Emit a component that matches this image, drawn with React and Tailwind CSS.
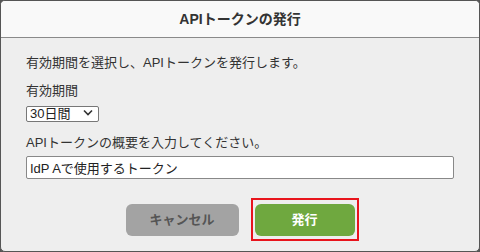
import React from 'react';

const App = () => {
  return (
    <div className="w-[480px] h-[252px] bg-[#555] font-['Liberation_Sans','Noto_Sans_CJK_JP',sans-serif]">
      <div className="w-full h-full flex flex-col rounded-[5px] border border-[#555] overflow-hidden bg-[#eeeeee]">
        {/* Header */}
        <div className="h-[37px] shrink-0 flex items-center justify-center bg-[#f9f9f9] border-b border-[#8a8a8a]">
          <h1 className="text-[14px] font-bold text-[#333] leading-none">APIトークンの発行</h1>
        </div>

        {/* Body */}
        <div className="flex-1 px-[25px] pt-[16px] text-[13px] leading-[18px] text-[#333]">
          <p>有効期間を選択し、APIトークンを発行します。</p>
          <p className="mt-[10px]">有効期間</p>
          <div className="relative mt-[5px] w-[73px] h-[16px]">
            <select
              defaultValue="30"
              className="appearance-none w-full h-full bg-white border border-[#777] rounded-[2px] pl-[3px] text-[13px] leading-[14px] text-[#222] outline-none"
            >
              <option value="30">30日間</option>
              <option value="60">60日間</option>
              <option value="90">90日間</option>
            </select>
            <svg className="absolute right-[6px] top-[4px] pointer-events-none" width="10" height="7" viewBox="0 0 10 7">
              <path d="M1 1.5 L5 5.5 L9 1.5" fill="none" stroke="#333" strokeWidth="1.6" />
            </svg>
          </div>
          <p className="mt-[13px]">APIトークンの概要を入力してください。</p>
          <input
            type="text"
            defaultValue="IdP Aで使用するトークン"
            className="mt-[4px] block w-[428px] h-[23px] bg-white border border-[#888] rounded-[2px] px-[3px] text-[13px] text-[#222] outline-none"
          />

          {/* Actions */}
          <div className="mt-[25px] flex justify-center gap-4">
            <button className="w-[113px] h-[32px] rounded-[6px] bg-[#a3a3a3] text-[#555] text-[13px] font-bold">
              キャンセル
            </button>
            <div className="relative">
              <button className="w-[100px] h-[32px] rounded-[6px] bg-[#6fa83f] text-white text-[13px] font-bold">
                発行
              </button>
              <div className="absolute -left-[4px] -right-[4px] -top-[6px] -bottom-[5px] border-2 border-[#e8141c] pointer-events-none" />
            </div>
          </div>
        </div>
      </div>
    </div>
  );
};

export default App;
